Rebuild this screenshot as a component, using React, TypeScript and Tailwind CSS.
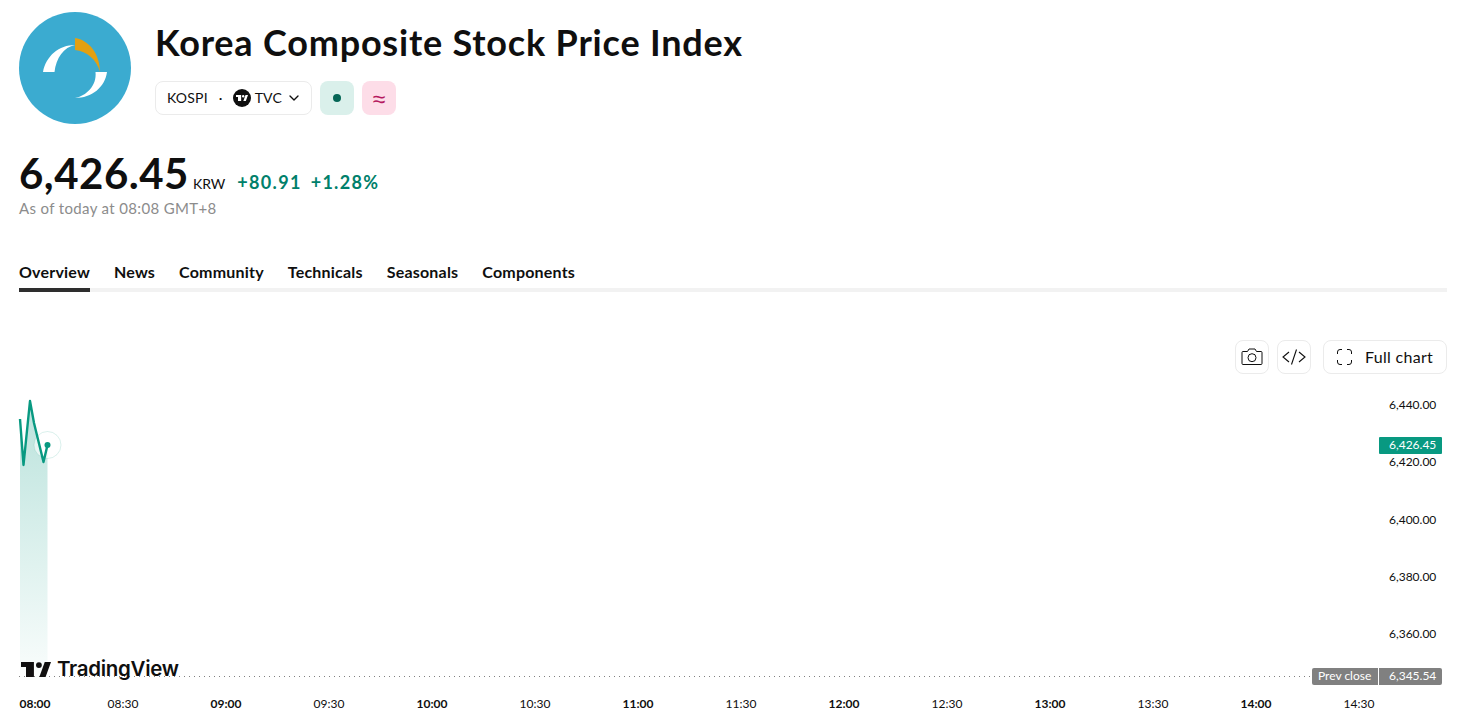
import { ChevronDown } from "lucide-react";

const font = "font-['Lato','Noto_Sans',sans-serif]";

const tabs = ["Overview", "News", "Community", "Technicals", "Seasonals", "Components"];
const prices = [
  { label: "6,440.00", top: "top-[397px]" },
  { label: "6,420.00", top: "top-[454px]" },
  { label: "6,400.00", top: "top-[512px]" },
  { label: "6,380.00", top: "top-[569px]" },
  { label: "6,360.00", top: "top-[626px]" },
];
const times = [
  { label: "08:00", left: "left-[35px]", bold: true },
  { label: "08:30", left: "left-[123px]" },
  { label: "09:00", left: "left-[226px]", bold: true },
  { label: "09:30", left: "left-[329px]" },
  { label: "10:00", left: "left-[432px]", bold: true },
  { label: "10:30", left: "left-[535px]" },
  { label: "11:00", left: "left-[638px]", bold: true },
  { label: "11:30", left: "left-[741px]" },
  { label: "12:00", left: "left-[844px]", bold: true },
  { label: "12:30", left: "left-[947px]" },
  { label: "13:00", left: "left-[1050px]", bold: true },
  { label: "13:30", left: "left-[1153px]" },
  { label: "14:00", left: "left-[1256px]", bold: true },
  { label: "14:30", left: "left-[1359px]" },
];

function KospiLogo() {
  return (
    <svg width="112" height="112" viewBox="19 12 112 112" className="shrink-0">
      <circle cx="75" cy="68" r="56" fill="#3BABD0" />
      <path d="M43 72C46 56 59 45 75 45C64 47 56 58 54.5 72Z" fill="#fff" />
      <path d="M75 38C89 40 100 54 100 72C97 60 87 51 75 50Z" fill="#E3A011" />
      <path d="M95.500 72H107C105 87 92 98 75 98C86 96 97 86 95.500 72Z" fill="#fff" />
    </svg>
  );
}

function TvMark({ className }: { className?: string }) {
  return (
    <svg viewBox="0 0 36 18" className={className} fill="currentColor">
      <path d="M15.500 18H6V6H0V0h15.500zM29.500 18h-7.500L28.500 0H36z" />
      <circle cx="21.500" cy="3.700" r="3.500" />
    </svg>
  );
}

export default function App() {
  return (
    <div className={`${font} relative h-[725px] w-[1462px] overflow-hidden bg-white text-[#0f0f0f]`}>
      <header className="flex gap-6 px-[19px] pt-3">
        <KospiLogo />
        <div className="pt-[6px]">
          <h1 className="text-[36px] font-bold leading-[48px] tracking-[0.8px]">Korea Composite Stock Price Index</h1>
          <div className="mt-[15px] flex gap-2">
            <button className="flex h-[34px] w-[157px] items-center rounded-lg border border-[#ebebeb] pl-[11px] text-sm tracking-[0.2px]">
              <span>KOSPI</span>
              <span className="ml-[11px] mr-[10px]">·</span>
              <span className="mr-1 flex h-[18px] w-[18px] items-center justify-center rounded-full bg-[#0f0f0f] text-white">
                <TvMark className="w-3" />
              </span>
              <span>TVC</span>
              <ChevronDown size={16} className="ml-1" />
            </button>
            <span className="flex h-[34px] w-[34px] items-center justify-center rounded-lg bg-[#daf0eb]">
              <span className="h-2 w-2 rounded-full bg-[#056656]" />
            </span>
            <span className="flex h-[34px] w-[34px] items-center justify-center rounded-lg bg-[#fddde8] font-['Noto_Sans',sans-serif] text-[23px] leading-none text-[#b5195f]">
              ≈
            </span>
          </div>
        </div>
      </header>

      <section className="mt-[26px] px-[19px]">
        <div className="flex items-baseline">
          <span className="text-[42px] font-bold leading-[46px] tracking-[0.5px]">6,426.45</span>
          <span className="ml-1 text-sm">KRW</span>
          <span className="ml-[12px] text-lg font-bold tracking-[1.300px] text-[#00806b]">+80.91</span>
          <span className="ml-[9px] text-lg font-bold tracking-[1.300px] text-[#00806b]">+1.28%</span>
        </div>
        <p className="mt-[2px] text-[15px] leading-5 tracking-[0.35px] text-[#8c8c8c]">As of today at 08:08 GMT+8</p>
      </section>

      <nav className="ml-[19px] mr-[15px] mt-[44px] flex gap-6 border-b-[4px] border-[#f2f2f2] text-base font-bold tracking-[0.2px]">
        {tabs.map((tab, i) => (
          <a
            key={tab}
            className={
              i === 0
                ? "-mb-[4px] border-b-[4px] border-[#2e2e2e] pb-[6px] leading-5"
                : "pb-[6px] leading-5"
            }
          >
            {tab}
          </a>
        ))}
      </nav>

      <div className="mt-[48px] flex justify-end gap-2 px-[15px]">
        <button className="flex h-[34px] w-[34px] items-center justify-center rounded-lg border border-[#ebebeb]">
          <svg width="22" height="18" viewBox="0 0 22 18" fill="none" stroke="currentColor">
            <path d="M2 3.500h4.500L8 1h6l1.500 2.500H20a1 1 0 0 1 1 1V15.500a1 1 0 0 1-1 1H2a1 1 0 0 1-1-1V4.500a1 1 0 0 1 1-1Z" />
            <circle cx="11" cy="9.700" r="4" />
          </svg>
        </button>
        <button className="flex h-[34px] w-[34px] items-center justify-center rounded-lg border border-[#ebebeb]">
          <svg width="26" height="18" viewBox="0 0 26 18" fill="none" stroke="currentColor" strokeWidth="1.100">
            <path d="M8 4 2 9l6 5M18 4l6 5-6 5M15.500 1.500l-5 15" />
          </svg>
        </button>
        <button className="ml-1 flex h-[34px] w-[124px] items-center gap-[13px] rounded-lg border border-[#ebebeb] pl-[13px] text-base tracking-[0.3px]">
          <svg width="15" height="16" viewBox="0 0 15 16" fill="none" stroke="currentColor">
            <path d="M.500 5V3A2.500 2.500 0 0 1 3 .500h2M10 .500h2A2.500 2.500 0 0 1 14.500 3v2M14.500 11v2a2.500 2.500 0 0 1-2.500 2.500h-2M5 15.500H3A2.500 2.500 0 0 1 .500 13v-2" />
          </svg>
          Full chart
        </button>
      </div>

      <div className="absolute inset-0 text-xs">
        <svg width="1320" height="290" viewBox="0 390 1320 290" className="absolute left-0 top-[390px]">
          <defs>
            <linearGradient id="area" x1="0" y1="0" x2="0" y2="1">
              <stop offset="0" stopColor="#089981" stopOpacity="0.28" />
              <stop offset="1" stopColor="#089981" stopOpacity="0.02" />
            </linearGradient>
          </defs>
          <path d="M20 419 24 465 30 401 34 423 43.500 462 47.500 445V680H20Z" fill="url(#area)" />
          <circle cx="47.500" cy="445" r="13.500" fill="#fff" fillOpacity="0.6" stroke="#089981" strokeOpacity="0.15" />
          <path
            d="M20 419 23.500 465 30 401 34 423 43.500 462 47.500 445"
            fill="none"
            stroke="#089981"
            strokeWidth="2.400"
            strokeLinejoin="round"
          />
          <circle cx="47.500" cy="445" r="3" fill="#089981" />
          <line x1="19" y1="676.500" x2="1312" y2="676.500" stroke="#808080" strokeDasharray="1 4" />
        </svg>

        <div className="absolute left-[21px] top-[661px] flex items-center gap-[6px] text-[#0f0f0f]">
          <TvMark className="w-[30px]" />
          <span className="font-['Inter',sans-serif] text-[20.500px] font-semibold leading-4 tracking-[-0.3px]">
            TradingView
          </span>
        </div>

        {prices.map(p => (
          <span key={p.label} className={`absolute left-[1389px] leading-[15px] ${p.top}`}>
            {p.label}
          </span>
        ))}

        <span className="absolute left-[1379px] top-[437px] h-[17px] w-[63px] rounded-[1px] bg-[#089981] pl-[10px] leading-[15px] text-white">
          6,426.45
        </span>

        <div className="absolute left-[1312px] top-[668px] flex gap-px leading-[15px] text-white">
          <span className="h-[17px] w-[66px] rounded-l-[2px] bg-[#808080] pl-[6px] text-xs">Prev close</span>
          <span className="h-[17px] w-[63px] rounded-r-[2px] bg-[#808080] pl-[10px]">6,345.54</span>
        </div>

        {times.map(t => (
          <span
            key={t.label}
            className={`absolute top-[696px] -translate-x-1/2 leading-[15px] ${t.left} ${t.bold ? "font-bold" : ""}`}
          >
            {t.label}
          </span>
        ))}
      </div>
    </div>
  );
}
